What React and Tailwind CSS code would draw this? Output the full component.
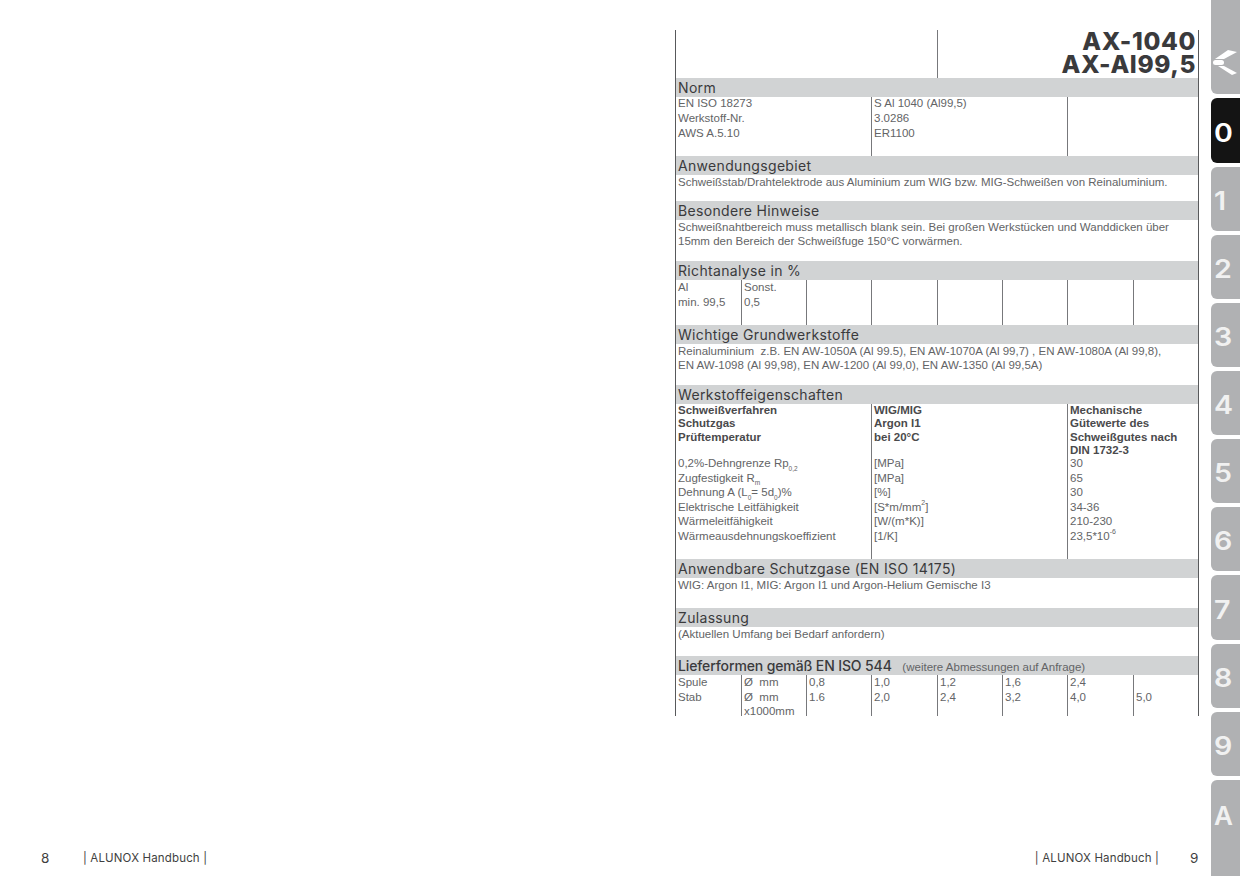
const BODY = { fontFamily: '"Liberation Sans", Arial, sans-serif' };
const WIDE = { fontFamily: 'Inter, "Liberation Sans", sans-serif' };
const COLS = 'grid-cols-[65px_65px_65px_66px_65px_65px_66px_65px]';

function Band({ children, className = 'tracking-[0.33px]' }) {
  return (
    <div className={`h-[19px] bg-[#d1d3d4] pl-[2px] text-[14px] leading-[20px] text-[#3a3a3c] whitespace-nowrap ${className}`} style={WIDE}>
      {children}
    </div>
  );
}

function Grid({ height, cells }) {
  return (
    <div className={`grid ${COLS} ${height}`}>
      {cells.map((c, i) => (
        <div key={i} className={`${c.span || 'col-span-1'} ${i ? 'border-l border-[#77787b]' : ''} pl-[2px] overflow-hidden`}>
          {c.content}
        </div>
      ))}
    </div>
  );
}

function Lines({ items, className = 'leading-[15px]' }) {
  return (
    <div className={`whitespace-nowrap ${className}`}>
      {items.map((t, i) => <div key={i}>{t}</div>)}
    </div>
  );
}

function Sub({ children }) {
  return <sub className="text-[6.5px] leading-none align-[-2px]">{children}</sub>;
}

function Sup({ children }) {
  return <sup className="text-[7px] leading-none align-[2px]">{children}</sup>;
}

function Tab({ label, className, active }) {
  return (
    <div className={`${className} w-[29px] flex items-center pl-[3px] pt-[4px] text-[26px] font-semibold leading-none ${active ? 'bg-[#141414] text-white' : 'bg-[#b0b1b3] text-[#f1f1f1]'}`} style={WIDE}>
      <span className="inline-block origin-left scale-x-[1.1]">{label}</span>
    </div>
  );
}

const EMPTY = { content: null };
const ROW = 'leading-[14.5px]';

export default function App() {
  return (
    <div className="flex h-[876px] w-[1240px] overflow-hidden bg-white text-[11.5px] text-[#636466] antialiased" style={BODY}>
      <div className="flex w-[675px] shrink-0 items-end pb-[10px] pl-[41px] text-[#3f3f41]">
        <span className="w-[42px] text-[13.5px] leading-[16px]" style={WIDE}>8</span>
        <span className="text-[11.5px] leading-[16px] tracking-[0.15px]" style={WIDE}>| ALUNOX Handbuch |</span>
      </div>

      <div className="flex w-[524px] shrink-0 flex-col justify-between pt-[30px] pb-[10px]">
        <div className="border-x border-[#58595b]">
          <div className={`grid h-[48px] ${COLS}`}>
            <div className="col-span-4" />
            <div className="col-span-4 border-l border-[#77787b] pr-[2px] text-right text-[24.5px] font-extrabold leading-[22.5px] tracking-[0.6px] text-[#3a3a3c]" style={WIDE}>
              <div>AX-1040</div>
              <div>AX-Al99,5</div>
            </div>
          </div>

          <Band>Norm</Band>
          <Grid height="h-[59px]" cells={[
            { span: 'col-span-3', content: <Lines className="-mt-[1px] leading-[15px]" items={['EN ISO 18273', 'Werkstoff-Nr.', 'AWS A.5.10']} /> },
            { span: 'col-span-3', content: <Lines className="-mt-[1px] leading-[15px]" items={['S Al 1040 (Al99,5)', '3.0286', 'ER1100']} /> },
            { span: 'col-span-2', content: null },
          ]} />

          <Band>Anwendungsgebiet</Band>
          <div className="h-[26px] pl-[2px] leading-[15px] whitespace-nowrap">Schweißstab/Drahtelektrode aus Aluminium zum WIG bzw. MIG-Schweißen von Reinaluminium.</div>

          <Band>Besondere Hinweise</Band>
          <div className="h-[41px] pl-[2px] leading-[14.2px] whitespace-nowrap">
            <div>Schweißnahtbereich muss metallisch blank sein. Bei großen Werkstücken und Wanddicken über</div>
            <div>15mm den Bereich der Schweißfuge 150°C vorwärmen.</div>
          </div>

          <Band>Richtanalyse in %</Band>
          <Grid height="h-[45px]" cells={[
            { content: <Lines items={['Al', 'min. 99,5']} /> },
            { content: <Lines items={['Sonst.', '0,5']} /> },
            EMPTY, EMPTY, EMPTY, EMPTY, EMPTY, EMPTY,
          ]} />

          <Band>Wichtige Grundwerkstoffe</Band>
          <div className="h-[41px] pl-[2px] leading-[14.2px] whitespace-nowrap">
            <div>Reinaluminium&nbsp; z.B. EN AW-1050A (Al 99.5), EN AW-1070A (Al 99,7) , EN AW-1080A (Al 99,8),</div>
            <div>EN AW-1098 (Al 99,98), EN AW-1200 (Al 99,0), EN AW-1350 (Al 99,5A)</div>
          </div>

          <Band>Werkstoffeigenschaften</Band>
          <Grid height="h-[155px]" cells={[
            { span: 'col-span-3', content: (
              <>
                <Lines className="h-[52px] font-bold leading-[13.4px] text-[#4a4a4c]" items={['Schweißverfahren', 'Schutzgas', 'Prüftemperatur']} />
                <Lines className="leading-[14.6px]" items={[
                  <>0,2%-Dehngrenze Rp<Sub>0,2</Sub></>,
                  <>Zugfestigkeit R<Sub>m</Sub></>,
                  <>Dehnung A (L<Sub>0</Sub>= 5d<Sub>0</Sub>)%</>,
                  'Elektrische Leitfähigkeit',
                  'Wärmeleitfähigkeit',
                  'Wärmeausdehnungskoeffizient',
                ]} />
              </>
            ) },
            { span: 'col-span-3', content: (
              <>
                <Lines className="h-[52px] font-bold leading-[13.4px] text-[#4a4a4c]" items={['WIG/MIG', 'Argon I1', 'bei 20°C']} />
                <Lines className="leading-[14.6px]" items={['[MPa]', '[MPa]', '[%]', <>[S*m/mm<Sup>2</Sup>]</>, '[W/(m*K)]', '[1/K]']} />
              </>
            ) },
            { span: 'col-span-2', content: (
              <>
                <Lines className="h-[52px] font-bold leading-[13.4px] text-[#4a4a4c]" items={['Mechanische', 'Gütewerte des', 'Schweißgutes nach', 'DIN 1732-3']} />
                <Lines className="leading-[14.6px]" items={['30', '65', '30', '34-36', '210-230', <>23,5*10<Sup>-6</Sup></>]} />
              </>
            ) },
          ]} />

          <Band>Anwendbare Schutzgase (EN ISO 14175)</Band>
          <div className="h-[30px] pl-[2px] leading-[15px] whitespace-nowrap">WIG: Argon I1, MIG: Argon I1 und Argon-Helium Gemische I3</div>

          <Band>Zulassung</Band>
          <div className="h-[29px] pl-[2px] leading-[15px] whitespace-nowrap">(Aktuellen Umfang bei Bedarf anfordern)</div>

          <Band className="font-medium tracking-[-0.12px]">Lieferformen gemäß EN ISO 544 <span className="ml-[7px] text-[11.5px] font-normal tracking-normal text-[#636466]" style={BODY}>(weitere Abmessungen auf Anfrage)</span></Band>
          <Grid height="h-[41px]" cells={[
            { content: <Lines items={['Spule', 'Stab']} className={ROW} /> },
            { content: <Lines items={['Ø\u00a0\u00a0mm', 'Ø\u00a0\u00a0mm', 'x1000mm']} className={ROW} /> },
            { content: <Lines items={['0,8', '1.6']} className={ROW} /> },
            { content: <Lines items={['1,0', '2,0']} className={ROW} /> },
            { content: <Lines items={['1,2', '2,4']} className={ROW} /> },
            { content: <Lines items={['1,6', '3,2']} className={ROW} /> },
            { content: <Lines items={['2,4', '4,0']} className={ROW} /> },
            { content: <Lines items={['\u00a0', '5,0']} className={ROW} /> },
          ]} />
        </div>

        <div className="flex items-end justify-end text-[#3f3f41]">
          <span className="text-[11.5px] leading-[16px] tracking-[0.15px]" style={WIDE}>| ALUNOX Handbuch |</span>
          <span className="ml-[31px] w-[9px] text-[13.5px] leading-[16px]" style={WIDE}>9</span>
        </div>
      </div>

      <div className="ml-[12px] flex w-[29px] shrink-0 flex-col gap-[4px]">
        <div className="relative h-[94px] w-[29px] rounded-bl-[6px] bg-[#b0b1b3]">
          <svg className="absolute left-0 top-0" width="29" height="94" viewBox="0 0 29 94" aria-hidden="true">
            <polygon points="4,59 17,50 26,52 13,59" fill="#fff" />
            <polygon points="7,66 13,66 26,73 21,75" fill="#fff" />
            <rect x="2" y="60" width="11" height="5" rx="2.5" fill="#fff" />
          </svg>
        </div>
        <Tab label="0" className="h-[65px] rounded-l-[6px]" active />
        <Tab label="1" className="h-[64px] rounded-l-[6px]" />
        <Tab label="2" className="h-[64px] rounded-l-[6px]" />
        <Tab label="3" className="h-[64px] rounded-l-[6px]" />
        <Tab label="4" className="h-[64px] rounded-l-[6px]" />
        <Tab label="5" className="h-[64px] rounded-l-[6px]" />
        <Tab label="6" className="h-[64px] rounded-l-[6px]" />
        <Tab label="7" className="h-[65px] rounded-l-[6px]" />
        <Tab label="8" className="h-[64px] rounded-l-[6px]" />
        <Tab label="9" className="h-[64px] rounded-l-[6px]" />
        <div className="flex h-[96px] w-[29px] items-start rounded-tl-[6px] bg-[#b0b1b3] pl-[3px] pt-[23px] text-[26px] font-semibold leading-none text-[#f1f1f1]" style={WIDE}>A</div>
      </div>
    </div>
  );
}
